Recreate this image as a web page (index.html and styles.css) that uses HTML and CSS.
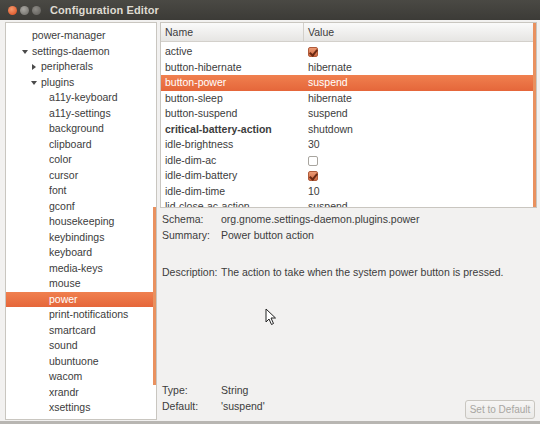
FILE: index.html
```html
<!DOCTYPE html>
<html lang="en">
  <head>
    <meta charset="UTF-8" />
    <title>Configuration Editor</title>
    <link rel="stylesheet" href="styles.css">
  </head>
  <body>
    <div class="window">
      <div class="titlebar">
        <div class="win-buttons">
          <span class="wbtn close"></span>
          <span class="wbtn min"></span>
          <span class="wbtn max"></span>
        </div>
        <div class="title">Configuration Editor</div>
      </div>

      <div class="main">
        <!-- schema tree -->
        <div class="tree">
          <div class="node d1">power-manager</div>
          <div class="node d1"><span class="exp open"></span>settings-daemon</div>
          <div class="node d2"><span class="exp"></span>peripherals</div>
          <div class="node d2"><span class="exp open"></span>plugins</div>
          <div class="node d3">a11y-keyboard</div>
          <div class="node d3">a11y-settings</div>
          <div class="node d3">background</div>
          <div class="node d3">clipboard</div>
          <div class="node d3">color</div>
          <div class="node d3">cursor</div>
          <div class="node d3">font</div>
          <div class="node d3">gconf</div>
          <div class="node d3">housekeeping</div>
          <div class="node d3">keybindings</div>
          <div class="node d3">keyboard</div>
          <div class="node d3">media-keys</div>
          <div class="node d3">mouse</div>
          <div class="node d3 selected">power</div>
          <div class="node d3">print-notifications</div>
          <div class="node d3">smartcard</div>
          <div class="node d3">sound</div>
          <div class="node d3">ubuntuone</div>
          <div class="node d3">wacom</div>
          <div class="node d3">xrandr</div>
          <div class="node d3">xsettings</div>
          <div class="node d3">xsettings</div>
          <span class="overlay-scroll tree-scroll"></span>
        </div>

        <div class="right">
          <!-- keys table -->
          <div class="keys">
            <div class="keys-head">
              <div class="col-name">Name</div>
              <div class="col-value">Value</div>
            </div>
            <div class="key"><div class="col-name">active</div><div class="col-value"><span class="check on"></span></div></div>
            <div class="key"><div class="col-name">button-hibernate</div><div class="col-value">hibernate</div></div>
            <div class="key selected"><div class="col-name">button-power</div><div class="col-value">suspend</div></div>
            <div class="key"><div class="col-name">button-sleep</div><div class="col-value">hibernate</div></div>
            <div class="key"><div class="col-name">button-suspend</div><div class="col-value">suspend</div></div>
            <div class="key changed"><div class="col-name">critical-battery-action</div><div class="col-value">shutdown</div></div>
            <div class="key"><div class="col-name">idle-brightness</div><div class="col-value">30</div></div>
            <div class="key"><div class="col-name">idle-dim-ac</div><div class="col-value"><span class="check"></span></div></div>
            <div class="key"><div class="col-name">idle-dim-battery</div><div class="col-value"><span class="check on"></span></div></div>
            <div class="key"><div class="col-name">idle-dim-time</div><div class="col-value">10</div></div>
            <div class="key"><div class="col-name">lid-close-ac-action</div><div class="col-value">suspend</div></div>
            <span class="overlay-scroll keys-scroll"></span>
          </div>

          <!-- key details -->
          <div class="details">
            <div class="info">
              <div class="label">Schema:</div>
              <div>org.gnome.settings-daemon.plugins.power</div>
              <div class="label">Summary:</div>
              <div>Power button action</div>
              <div class="label desc">Description:</div>
              <div class="desc">The action to take when the system power button is pressed.</div>
            </div>
            <div class="bottom">
              <div class="info">
                <div class="label">Type:</div>
                <div>String</div>
                <div class="label">Default:</div>
                <div>'suspend'</div>
              </div>
              <button class="reset" disabled>Set to Default</button>
            </div>
          </div>
        </div>
      </div>

      <svg class="pointer" width="12" height="18" viewBox="0 0 12 18">
        <path d="M1 1 L1 14 L4 11 L6.5 16.5 L8.5 15.5 L6 10 L10.5 10 Z" fill="#fff" stroke="#222" stroke-width="1" stroke-linejoin="round"/>
      </svg>
    </div>
  </body>
</html>
```

FILE: styles.css
```css
* {
  box-sizing: border-box;
}

body {
  margin: 0;
  background: #f2f1f0;
  font-family: "Liberation Sans", "DejaVu Sans", sans-serif;
  font-size: 10.5px;
  color: #3c3c3c;
}

.window {
  position: relative;
  width: 540px;
  height: 424px;
  background: #f2f1f0;
  border-bottom: 3px solid #b8b6b2;
  overflow: hidden;
}

.titlebar {
  height: 20px;
  display: flex;
  align-items: center;
  background: linear-gradient(#4a4944, #3c3b37);
  padding-left: 8px;
}

.win-buttons {
  display: flex;
  gap: 3px;
}

.wbtn {
  width: 9px;
  height: 9px;
  border-radius: 50%;
  background: radial-gradient(circle at 40% 35%, #a9a7a2, #6b6964);
}

.wbtn.close {
  background: radial-gradient(circle at 40% 35%, #f59a6e, #d9481b);
}

.wbtn.max {
  background: radial-gradient(circle at 40% 35%, #8d8b86, #5c5a56);
}

.title {
  margin-left: 9px;
  color: #dfdbd2;
  font-weight: bold;
  font-size: 11px;
  letter-spacing: 0.1px;
}

.main {
  display: flex;
  gap: 3px;
  height: 399px;
  padding: 2px 3px 0 5px;
}

/* left tree */
.tree {
  position: relative;
  width: 152px;
  height: 398px;
  background: #fff;
  border: 1px solid #c9c6c0;
  padding-top: 5px;
  overflow: hidden;
}

.node {
  height: 15.5px;
  line-height: 15.5px;
  white-space: nowrap;
  position: relative;
}

.node.d1 { padding-left: 26px; }
.node.d2 { padding-left: 35px; }
.node.d3 { padding-left: 43px; }

.exp {
  position: absolute;
  top: 5px;
  width: 0;
  height: 0;
  border-top: 3px solid transparent;
  border-bottom: 3px solid transparent;
  border-left: 4px solid #4a4a4a;
}

.d1 .exp { left: 17px; }
.d2 .exp { left: 26px; }

.exp.open {
  top: 6px;
  border-left: 3px solid transparent;
  border-right: 3px solid transparent;
  border-top: 4px solid #4a4a4a;
  border-bottom: none;
}

.d1 .exp.open { left: 16px; }
.d2 .exp.open { left: 25px; }

.selected {
  background: linear-gradient(#f0804f, #e5663a);
  color: #fff;
}

.overlay-scroll {
  position: absolute;
  width: 3px;
  background: #e9915f;
}

.tree-scroll {
  right: 0;
  top: 184px;
  height: 178px;
}

/* right side */
.right {
  flex: 1;
  display: flex;
  flex-direction: column;
}

.keys {
  position: relative;
  height: 186px;
  background: #fff;
  border: 1px solid #c9c6c0;
  overflow: hidden;
}

.keys-head {
  display: flex;
  height: 19px;
  line-height: 19px;
  background: linear-gradient(#fafafa, #e6e5e3);
  border-bottom: 1px solid #d3d0cb;
  margin-bottom: 2px;
}

.keys-head .col-name {
  border-right: 1px solid #d3d0cb;
}

.key {
  display: flex;
  height: 15.5px;
  line-height: 15.5px;
}

.col-name {
  width: 143px;
  padding-left: 4px;
  white-space: nowrap;
}

.col-value {
  flex: 1;
  padding-left: 4px;
  white-space: nowrap;
}

.key.changed .col-name {
  font-weight: bold;
}

.check {
  display: inline-block;
  width: 10px;
  height: 10px;
  margin-top: 3px;
  border: 1px solid #a8a59f;
  border-radius: 2px;
  background: #fff;
  vertical-align: top;
}

.check.on {
  border-color: #b05b3a;
  background: linear-gradient(#ec9a74, #cf6a43);
  position: relative;
}

.check.on::after {
  content: "";
  position: absolute;
  left: 2px;
  top: 0px;
  width: 3px;
  height: 6px;
  border: solid #6b2a14;
  border-width: 0 2px 2px 0;
  transform: rotate(40deg);
}

.keys-scroll {
  right: 0;
  top: 0;
  height: 186px;
}

.details {
  flex: 1;
  display: flex;
  flex-direction: column;
  padding: 3px 2px 0 2px;
}

.info {
  display: grid;
  grid-template-columns: 59px auto;
  line-height: 16px;
  white-space: nowrap;
}

.info .desc {
  margin-top: 21px;
}

.bottom {
  margin-top: auto;
  display: flex;
  justify-content: space-between;
  align-items: flex-end;
}

.bottom .info {
  margin-bottom: 5px;
}

.reset {
  font-family: inherit;
  font-size: 10px;
  white-space: nowrap;
  color: #a8a6a2;
  background: linear-gradient(#f6f5f4, #ebeae8);
  border: 1px solid #c9c6c0;
  border-radius: 3px;
  padding: 0 2px;
  height: 19px;
  width: 70px;
}

.pointer {
  position: absolute;
  left: 265px;
  top: 308px;
}
```
